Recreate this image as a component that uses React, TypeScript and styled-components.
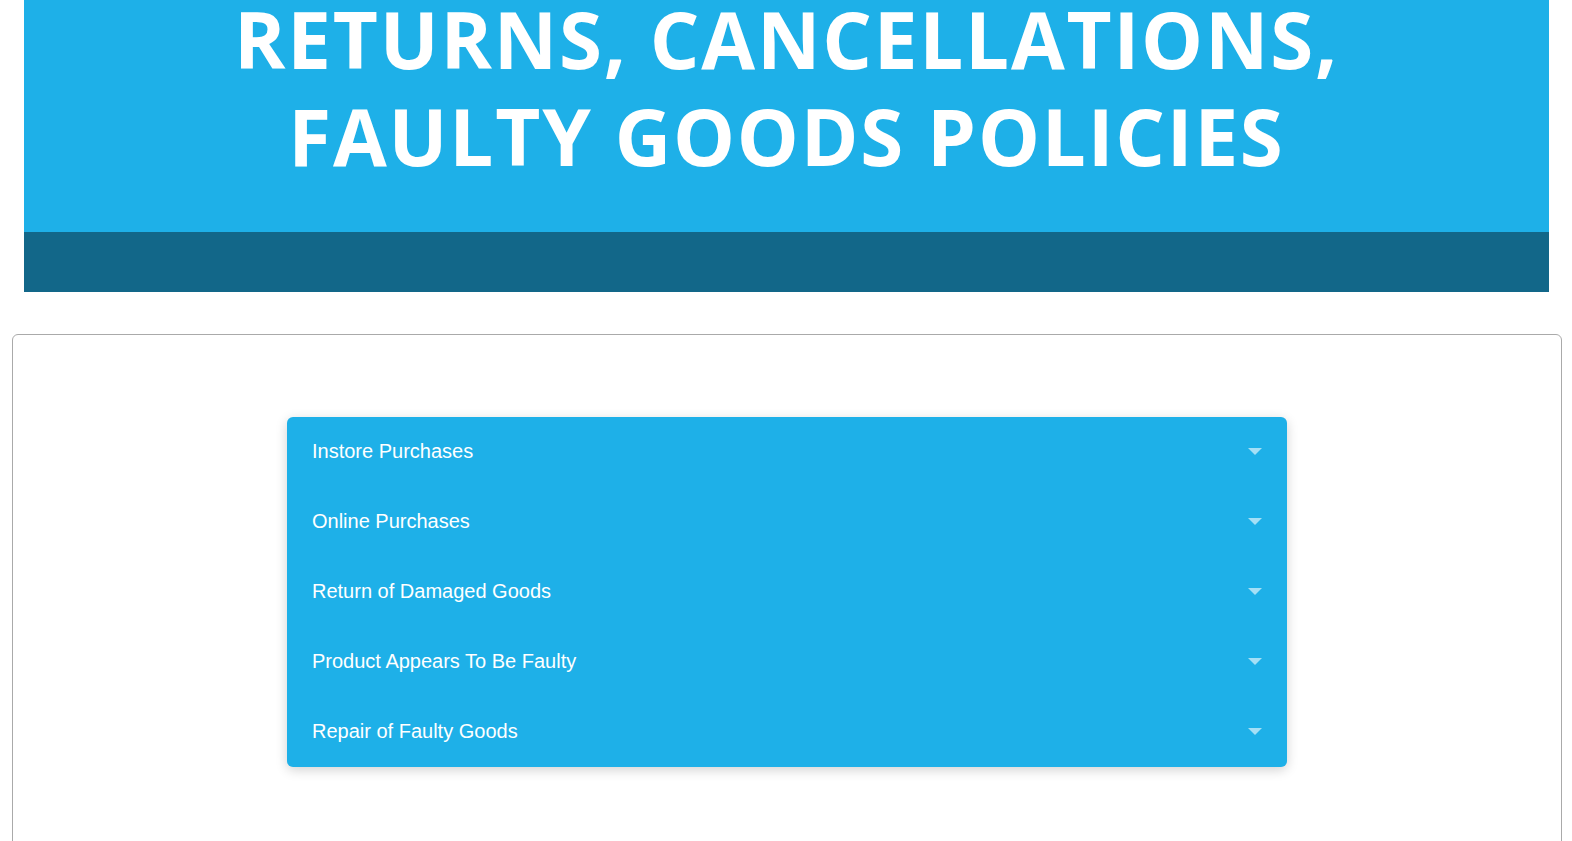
import React from "react";
import styled, { createGlobalStyle } from "styled-components";

const Global = createGlobalStyle`
  html, body { margin: 0; padding: 0; background: #ffffff; }
  body { font-family: "Liberation Sans", Arial, sans-serif; overflow: hidden; }
`;

const Page = styled.div`
  display: flex;
  flex-direction: column;
  padding: 0 10px 0 12px;
`;

const BannerWrap = styled.div`
  padding: 0 13px 0 12px;
`;

const Banner = styled.div`
  display: flex;
  flex-direction: column;
  height: 292px;
  overflow: hidden;
`;

const BannerTop = styled.div`
  flex: 0 0 232px;
  background: #1eb0e8;
  display: flex;
  justify-content: center;
  overflow: hidden;
`;

const BannerTitle = styled.h1`
  margin: 0;
  display: flex;
  flex-direction: column;
  align-items: center;
  gap: 19px;
  font-family: "Open Sans", sans-serif;
  font-weight: 700;
  font-size: 78px;
  line-height: 78px;
  letter-spacing: 1.8px;
  color: #ffffff;
  white-space: nowrap;
`;

const TitleLine = styled.span`
  display: block;
`;

const BannerStrip = styled.div`
  flex: 0 0 60px;
  background: #126789;
`;

const Card = styled.section`
  margin-top: 42px;
  border: 1px solid #aaaaaa;
  border-radius: 6px;
  padding: 82px 0 120px;
  display: flex;
  justify-content: center;
`;

const Accordion = styled.div`
  width: 1000px;
  background: #1eb0e8;
  border-radius: 6px;
  box-shadow: 0 3px 12px rgba(0, 0, 0, 0.18);
  display: flex;
  flex-direction: column;
`;

const Row = styled.div`
  height: 70px;
  box-sizing: border-box;
  display: flex;
  align-items: center;
  justify-content: space-between;
  padding: 0 25px 2px;
  color: #ffffff;
  font-size: 20px;
  cursor: pointer;
`;

const Caret = styled.span`
  width: 0;
  height: 0;
  border-left: 7px solid transparent;
  border-right: 7px solid transparent;
  border-top: 7px solid rgba(255, 255, 255, 0.6);
  margin-top: 1px;
`;

const items = [
  "Instore Purchases",
  "Online Purchases",
  "Return of Damaged Goods",
  "Product Appears To Be Faulty",
  "Repair of Faulty Goods",
];

export default function App() {
  return (
    <>
      <Global />
      <Page>
        <BannerWrap>
          <Banner>
            <BannerTop>
              <BannerTitle>
                <TitleLine>RETURNS, CANCELLATIONS,</TitleLine>
                <TitleLine>FAULTY GOODS POLICIES</TitleLine>
              </BannerTitle>
            </BannerTop>
            <BannerStrip />
          </Banner>
        </BannerWrap>
        <Card>
          <Accordion>
            {items.map((t) => (
              <Row key={t}>
                <span>{t}</span>
                <Caret />
              </Row>
            ))}
          </Accordion>
        </Card>
      </Page>
    </>
  );
}
